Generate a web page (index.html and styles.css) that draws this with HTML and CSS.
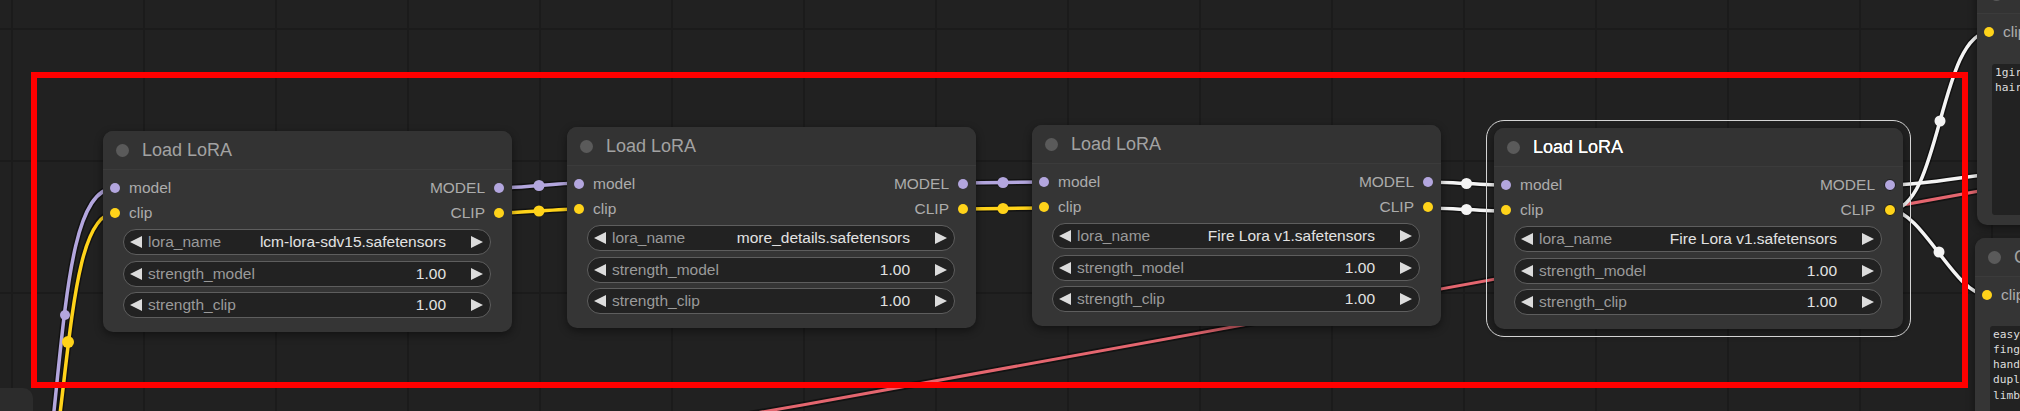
FILE: index.html
```html
<!DOCTYPE html>
<html>
<head>
<meta charset="utf-8">
<link rel="stylesheet" href="styles.css">
</head>
<body>
<div class="canvas">
  <div class="node stub"></div>

  <svg class="links" width="2020" height="411" viewBox="0 0 2020 411">
    <g class="shadow">
      <path d="M 52 430 C 66 300, 72 188, 115 188"/>
      <path d="M 58 430 C 72 320, 78 213, 115 213"/>
      <path d="M 499 188 C 519 188, 559 183, 579 183"/>
      <path d="M 499 213 C 519 213, 559 209, 579 209"/>
      <path d="M 963 183 C 983 183, 1023 182, 1043 182"/>
      <path d="M 963 209 C 983 209, 1023 208, 1043 208"/>
      <path d="M 1427 182 C 1447 182, 1486 185, 1506 185"/>
      <path d="M 1427 208 C 1447 208, 1486 211, 1506 211"/>
      <path d="M 1890 185 C 1930 185, 1960 176, 2040 168"/>
      <path d="M 1890 210 C 1941 210, 1939 32, 1990 32"/>
      <path d="M 1890 210 C 1922 210, 1955 295, 1987 295"/>
      <path d="M 750 414 C 1000 372, 1200 330, 2040 180"/>
    </g>
    <path class="lk vae" d="M 750 414 C 1000 372, 1200 330, 2040 180"/>
    <path class="lk model" d="M 52 430 C 66 300, 72 188, 115 188"/>
    <path class="lk clip" d="M 58 430 C 72 320, 78 213, 115 213"/>
    <path class="lk model" d="M 499 188 C 519 188, 559 183, 579 183"/>
    <path class="lk clip" d="M 499 213 C 519 213, 559 209, 579 209"/>
    <path class="lk model" d="M 963 183 C 983 183, 1023 182, 1043 182"/>
    <path class="lk clip" d="M 963 209 C 983 209, 1023 208, 1043 208"/>
    <path class="lk white" d="M 1427 182 C 1447 182, 1486 185, 1506 185"/>
    <path class="lk white" d="M 1427 208 C 1447 208, 1486 211, 1506 211"/>
    <path class="lk white" d="M 1890 185 C 1930 185, 1960 176, 2040 168"/>
    <path class="lk white" d="M 1890 210 C 1941 210, 1939 32, 1990 32"/>
    <path class="lk white" d="M 1890 210 C 1922 210, 1955 295, 1987 295"/>
    <circle class="md model" cx="65" cy="315" r="5"/>
    <circle class="md clip" cx="68" cy="342" r="6"/>
    <circle class="md model" cx="539" cy="185.5" r="5.5"/>
    <circle class="md clip" cx="539" cy="211" r="5.5"/>
    <circle class="md model" cx="1003" cy="182.5" r="5.5"/>
    <circle class="md clip" cx="1003" cy="208.5" r="5.5"/>
    <circle class="md white" cx="1466.5" cy="183.5" r="5.5"/>
    <circle class="md white" cx="1466.5" cy="209.5" r="5.5"/>
    <circle class="md white" cx="1940" cy="121" r="5.5"/>
    <circle class="md white" cx="1939" cy="252" r="5.5"/>
  </svg>

  <div class="node lora n1">
    <div class="title"><span class="tdot"></span><span class="ttext">Load LoRA</span></div>
    <div class="slots">
      <div class="slot"><span class="in"><i class="dot model"></i>model</span><span class="out">MODEL<i class="dot model"></i></span></div>
      <div class="slot"><span class="in"><i class="dot clip"></i>clip</span><span class="out">CLIP<i class="dot clip"></i></span></div>
    </div>
    <div class="widgets">
      <div class="widget"><i class="arr l"></i><span class="wlabel">lora_name</span><span class="wval">lcm-lora-sdv15.safetensors</span><i class="arr r"></i></div>
      <div class="widget"><i class="arr l"></i><span class="wlabel">strength_model</span><span class="wval">1.00</span><i class="arr r"></i></div>
      <div class="widget"><i class="arr l"></i><span class="wlabel">strength_clip</span><span class="wval">1.00</span><i class="arr r"></i></div>
    </div>
  </div>

  <div class="node lora n2">
    <div class="title"><span class="tdot"></span><span class="ttext">Load LoRA</span></div>
    <div class="slots">
      <div class="slot"><span class="in"><i class="dot model"></i>model</span><span class="out">MODEL<i class="dot model"></i></span></div>
      <div class="slot"><span class="in"><i class="dot clip"></i>clip</span><span class="out">CLIP<i class="dot clip"></i></span></div>
    </div>
    <div class="widgets">
      <div class="widget"><i class="arr l"></i><span class="wlabel">lora_name</span><span class="wval">more_details.safetensors</span><i class="arr r"></i></div>
      <div class="widget"><i class="arr l"></i><span class="wlabel">strength_model</span><span class="wval">1.00</span><i class="arr r"></i></div>
      <div class="widget"><i class="arr l"></i><span class="wlabel">strength_clip</span><span class="wval">1.00</span><i class="arr r"></i></div>
    </div>
  </div>

  <div class="node lora n3">
    <div class="title"><span class="tdot"></span><span class="ttext">Load LoRA</span></div>
    <div class="slots">
      <div class="slot"><span class="in"><i class="dot model"></i>model</span><span class="out">MODEL<i class="dot model"></i></span></div>
      <div class="slot"><span class="in"><i class="dot clip"></i>clip</span><span class="out">CLIP<i class="dot clip"></i></span></div>
    </div>
    <div class="widgets">
      <div class="widget"><i class="arr l"></i><span class="wlabel">lora_name</span><span class="wval">Fire Lora v1.safetensors</span><i class="arr r"></i></div>
      <div class="widget"><i class="arr l"></i><span class="wlabel">strength_model</span><span class="wval">1.00</span><i class="arr r"></i></div>
      <div class="widget"><i class="arr l"></i><span class="wlabel">strength_clip</span><span class="wval">1.00</span><i class="arr r"></i></div>
    </div>
  </div>

  <div class="node lora n4 selected">
    <div class="title"><span class="tdot"></span><span class="ttext">Load LoRA</span></div>
    <div class="slots">
      <div class="slot"><span class="in"><i class="dot model"></i>model</span><span class="out">MODEL<i class="dot model ring"></i></span></div>
      <div class="slot"><span class="in"><i class="dot clip"></i>clip</span><span class="out">CLIP<i class="dot clip ring"></i></span></div>
    </div>
    <div class="widgets">
      <div class="widget"><i class="arr l"></i><span class="wlabel">lora_name</span><span class="wval">Fire Lora v1.safetensors</span><i class="arr r"></i></div>
      <div class="widget"><i class="arr l"></i><span class="wlabel">strength_model</span><span class="wval">1.00</span><i class="arr r"></i></div>
      <div class="widget"><i class="arr l"></i><span class="wlabel">strength_clip</span><span class="wval">1.00</span><i class="arr r"></i></div>
    </div>
  </div>

  <div class="node enc e1">
    <div class="title"><span class="tdot"></span><span class="ttext">CLIP Text Encode (Prompt)</span></div>
    <div class="slots">
      <div class="slot"><span class="in"><i class="dot clip"></i>clip</span><span class="out">CONDITIONING<i class="dot cond"></i></span></div>
    </div>
    <div class="ta">1girl, solo,
hair, long</div>
  </div>

  <div class="node enc e2">
    <div class="title"><span class="tdot"></span><span class="ttext">CLIP Text Encode (Prompt)</span></div>
    <div class="slots">
      <div class="slot"><span class="in"><i class="dot clip"></i>clip</span><span class="out">CONDITIONING<i class="dot cond"></i></span></div>
    </div>
    <div class="ta">easynegative,
fingers,
hands,
duplicate,
limbs,</div>
  </div>

  <div class="annot"></div>
</div>
</body>
</html>
```

FILE: styles.css
```css
html, body {
  margin: 0;
  padding: 0;
  background: #202020;
  overflow: hidden;
}

.canvas {
  position: relative;
  width: 2020px;
  height: 411px;
  overflow: hidden;
  background-color: #212121;
  background-image:
    linear-gradient(#1b1b1b 2px, transparent 2px),
    linear-gradient(90deg, #1b1b1b 2px, transparent 2px);
  background-size: 132px 132px;
  background-position: 11px 28px;
  font-family: "Liberation Sans", Arial, sans-serif;
}

.links {
  position: absolute;
  left: 0;
  top: 0;
}

.links .shadow path {
  fill: none;
  stroke: rgba(0, 0, 0, 0.45);
  stroke-width: 6.5;
}

.lk {
  fill: none;
  stroke-width: 3.5;
}

.lk.model { stroke: #b3a6de; }
.lk.clip { stroke: #ffd31a; }
.lk.white { stroke: #f4f4f4; }
.lk.vae { stroke: #e4666f; stroke-width: 3; }

.md.model { fill: #b3a6de; }
.md.clip { fill: #ffd31a; }
.md.white { fill: #f4f4f4; }

.node {
  position: absolute;
  box-sizing: border-box;
  background: #353535;
  border-radius: 10px;
  box-shadow: 0 3px 8px rgba(0, 0, 0, 0.45);
}

.lora {
  width: 409px;
  height: 201px;
}

.n1 { left: 103px; top: 131px; }
.n2 { left: 567px; top: 127px; }
.n3 { left: 1032px; top: 125px; }
.n4 { left: 1494px; top: 128px; }

.selected::before {
  content: "";
  position: absolute;
  left: -8px;
  top: -8px;
  right: -8px;
  bottom: -8px;
  border: 1.5px solid #d4d4d4;
  border-radius: 18px;
  pointer-events: none;
}

.title {
  height: 38px;
  display: flex;
  align-items: center;
  padding-left: 12.5px;
  box-sizing: border-box;
  border-radius: 10px 10px 0 0;
  background: #333333;
  box-shadow: 0 1px 0 rgba(255, 255, 255, 0.03);
  white-space: nowrap;
  overflow: hidden;
}

.tdot {
  width: 13px;
  height: 13px;
  border-radius: 50%;
  background: #5a5a5a;
  margin-right: 13.5px;
  flex: none;
}

.ttext {
  font-size: 18px;
  color: #a2a2a2;
}

.selected .ttext {
  color: #ffffff;
  text-shadow: 0 0 0.4px #ffffff;
}

.slots {
  padding-top: 6.5px;
}

.slot {
  height: 25px;
  display: flex;
  justify-content: space-between;
  align-items: center;
  padding: 0 8px 0 7px;
  font-size: 15.5px;
  color: #acacac;
  white-space: nowrap;
}

.in, .out {
  display: flex;
  align-items: center;
  gap: 9px;
}

.dot {
  width: 10px;
  height: 10px;
  border-radius: 50%;
  flex: none;
  box-sizing: border-box;
}

.dot.model { background: #b3a6de; }
.dot.clip { background: #ffd31a; }
.dot.cond { background: #ffa931; }
.dot.ring { border: 1.5px solid #1c1c1c; width: 12px; height: 12px; margin-right: -1px; }

.widgets {
  margin-top: 3.5px;
  display: flex;
  flex-direction: column;
  gap: 5.5px;
  padding: 0 21px 0 20px;
}

.widget {
  height: 26px;
  box-sizing: border-box;
  border: 1px solid #5e5e5e;
  border-radius: 13px;
  background: #222222;
  display: flex;
  align-items: center;
  padding: 0 7px 0 6px;
  font-size: 15.5px;
  white-space: nowrap;
}

.arr {
  width: 0;
  height: 0;
  border-top: 6px solid transparent;
  border-bottom: 6px solid transparent;
  flex: none;
}

.arr.l { border-right: 12px solid #dcdcdc; }
.arr.r { border-left: 12px solid #dcdcdc; }

.wlabel {
  color: #9a9a9a;
  margin-left: 6px;
  flex: 1;
}

.wval {
  color: #e2e2e2;
  margin-right: 25px;
}

.enc {
  width: 320px;
}

.e1 { left: 1977px; top: -25px; height: 250px; }
.e2 { left: 1975px; top: 238px; height: 300px; }

.ta {
  margin: 19.5px 0 0 15px;
  background: #222222;
  border-radius: 3px;
  padding: 1px 3px;
  font-family: "DejaVu Sans Mono", "Liberation Mono", monospace;
  font-size: 11.2px;
  line-height: 15.3px;
  color: #dddddd;
  white-space: pre;
  overflow: hidden;
}

.e1 .ta { height: 149px; }
.e2 .ta { margin-top: 18px; height: 200px; }

.stub {
  left: -100px;
  top: 388px;
  width: 133px;
  height: 100px;
  background: #2c2c2c;
  box-shadow: none;
}

.annot {
  position: absolute;
  left: 31px;
  top: 72px;
  width: 1937px;
  height: 316px;
  box-sizing: border-box;
  border: 6px solid #ff0000;
  pointer-events: none;
}
```
